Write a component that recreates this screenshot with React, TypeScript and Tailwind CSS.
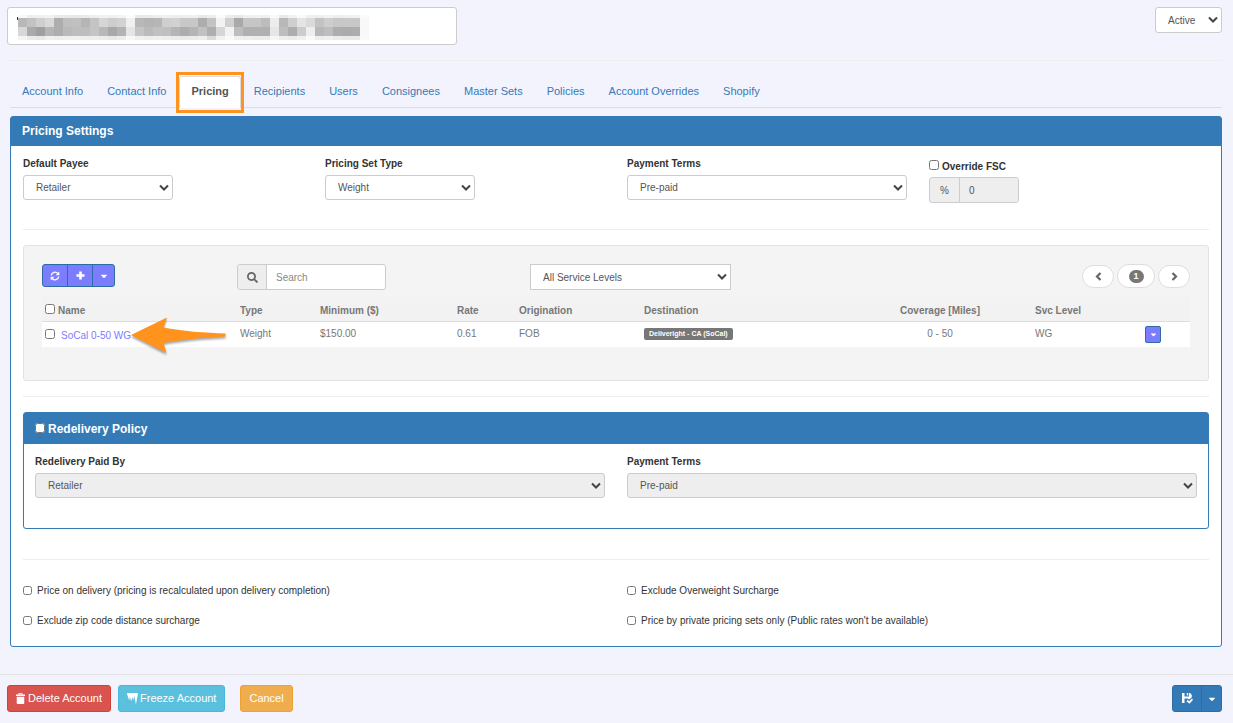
import React from "react";
import { FaCaretDown, FaIcicles, FaSearch } from "react-icons/fa";

const tabs = [
  "Account Info",
  "Contact Info",
  "Pricing",
  "Recipients",
  "Users",
  "Consignees",
  "Master Sets",
  "Policies",
  "Account Overrides",
  "Shopify",
];

const mosaicRows = [
  "f8 ee f0 f2 e9 ea e8 ea ee f2 f0 f4 fb ea ea ee f0 ee ee f0 e8 ec fb ec e8 f0 f2 f0 fa ea f2 fa f0 ee f2 ee f0 f2 fb",
  "b8 c2 cf d9 ad bf c0 b5 c4 d6 cd d2 f0 b8 b4 b6 cf d2 c8 c8 ad c3 f2 d0 a9 c6 c6 bd ed b8 cf e4 da c3 ce c8 c8 c8 f8",
  "d7 aa 9f b5 ad ba bd bd c4 b8 a8 b3 e5 c4 ba c1 c0 b5 ad b5 c1 ae d6 f2 bd b0 b0 b0 e6 bd ad cc ee b8 be ad ab ad f8",
  "f4 ec e8 f0 ee f0 f0 ee ee ec e8 ec f8 f0 ee f0 ee ec ea ec ee da f2 fa f0 ee ec ec f6 ee ec f0 fa ee f0 ec ea ea f9",
].map((row) => row.split(" "));

const mosaicY = [0, 3, 12, 21];
const mosaicHeight = [3, 9, 9, 4];

function Mosaic() {
  return (
    <svg width="352" height="25" viewBox="0 0 352 25" shapeRendering="crispEdges" aria-hidden="true">
      {mosaicRows.map((row, y) =>
        row.map((tone, x) => (
          <rect
            key={`${x}-${y}`}
            x={x * 9 + 1}
            y={mosaicY[y]}
            width="9"
            height={mosaicHeight[y]}
            fill={`#${tone}${tone}${tone}`}
          />
        )),
      )}
      <rect x="0" y="2" width="1" height="3" fill="#333" />
    </svg>
  );
}

function RefreshIcon() {
  return (
    <svg width="10" height="10" viewBox="0 0 20 20" fill="none" stroke="currentColor" strokeWidth="2.6" aria-hidden="true">
      <path d="M2.4 8.6A7.6 7.6 0 0 1 15.6 5" />
      <path d="M17.6 11.4A7.6 7.6 0 0 1 4.4 15" />
      <path d="M18.6 1v7.4h-7.4z" fill="currentColor" stroke="none" />
      <path d="M1.4 19v-7.4h7.4z" fill="currentColor" stroke="none" />
    </svg>
  );
}

function PlusIcon() {
  return (
    <svg width="9" height="9" viewBox="0 0 9 9" fill="currentColor" aria-hidden="true">
      <path d="M3.200 .5h2.600v2.700h2.700v2.600H5.800v2.700H3.200V5.800H.5V3.200h2.700z" />
    </svg>
  );
}

function ChevronIcon({ d }: { d: string }) {
  return (
    <svg width="7" height="9" viewBox="0 0 7 9" fill="none" stroke="currentColor" strokeWidth="2.2" aria-hidden="true">
      <path d={d} />
    </svg>
  );
}

function TrashIcon() {
  return (
    <svg width="9" height="11" viewBox="0 0 18 22" fill="currentColor" aria-hidden="true">
      <path d="M0 3h5V1.2C5 .5 5.5 0 6.200 0h5.600C12.500 0 13 .5 13 1.200V3h5v3H0zM7 1.500V3h4V1.500zM1.500 7.500h15V20c0 1.200-.8 2-2 2h-11c-1.200 0-2-.8-2-2z" />
    </svg>
  );
}

function SaveIcon() {
  return (
    <svg width="11" height="11" viewBox="0 0 22 22" fill="currentColor" aria-hidden="true">
      <path d="M0 0h5v7h9V0h2l3.500 3.500V9L14 13l-2.500-2H5v9H0z" />
      <path d="M9.500 0h3v5h-3z" />
      <path d="M9 16.500l2.500-2.500 3 2.500 5.500-5.500 2 2.500L15 21.500z" />
    </svg>
  );
}

type SelectProps = {
  id: string;
  value: string;
  label?: string;
  disabled?: boolean;
  className: string;
};

function Select({ id, value, label, disabled, className }: SelectProps) {
  return (
    <div className={`relative ${className}`}>
      <select
        id={id}
        aria-label={label}
        disabled={disabled}
        className="block h-full w-full appearance-none rounded-[inherit] border border-[#ccc] bg-white pr-5 pl-3 text-[#555] opacity-100 disabled:bg-[#eee]"
      >
        <option>{value}</option>
      </select>
      <svg
        className="pointer-events-none absolute inset-y-0 right-1 my-auto text-[#444]"
        width="10"
        height="8"
        viewBox="0 0 10 8"
        fill="none"
        stroke="currentColor"
        strokeWidth="2"
        aria-hidden="true"
      >
        <path d="M1 1.500L5 5.500L9 1.500" />
      </svg>
    </div>
  );
}

function Field({ id, label, children }: { id: string; label: string; children: React.ReactNode }) {
  return (
    <div>
      <label htmlFor={id} className="mb-1 block font-bold text-[#333]">
        {label}
      </label>
      {children}
    </div>
  );
}

function Option({ id, label }: { id: string; label: string }) {
  return (
    <div className="flex h-[30px] items-center">
      <input id={id} type="checkbox" className="mr-[5px] size-[9px]" />
      <label htmlFor={id}>{label}</label>
    </div>
  );
}

function ClickArrow() {
  return (
    <svg
      className="pointer-events-none absolute top-[-5px] left-[89px] drop-shadow-[0_2px_1px_rgba(0,0,0,0.35)]"
      width="96"
      height="38"
      viewBox="0 0 96 38"
      aria-hidden="true"
    >
      <path d="M0 18L36 0.500L32.500 10.500C50 14 75 16 94.500 16.500V19.500C75 20.500 50 22.500 32.500 26L35.500 36Z" fill="#ff931e" />
    </svg>
  );
}

export default function App() {
  return (
    <div className="flex min-h-screen flex-col bg-[#f3f3fe] font-['Liberation_Sans',Arial,sans-serif] text-[10px] leading-[15px] text-[#333]">
      <header className="mr-[11px] ml-[7px] flex items-start justify-between border-b border-[#eee] pt-[7px] pb-[15px]">
        <div className="relative w-[450px]">
          <input
            type="text"
            aria-label="Account name"
            className="block h-[38px] w-full rounded-[3px] border border-[#ccc] bg-white px-3"
          />
          <div className="pointer-events-none absolute top-2 left-[10px]">
            <Mosaic />
          </div>
        </div>
        <Select id="status" value="Active" label="Account status" className="h-[26px] w-[67px] rounded-[3px]" />
      </header>

      <nav className="mr-[11px] ml-[10px] mt-[15px] flex border-b border-[#ddd] pl-px text-[11px]">
        {tabs.map((tab) =>
          tab === "Pricing" ? (
            <a
              key={tab}
              href="#pricing"
              aria-current="page"
              className="relative mr-[2px] -mb-px rounded-t-[3px] border border-b-0 border-[#ddd] bg-white px-[11px] pt-[7px] pb-[9px] font-bold text-[#555]"
            >
              {tab}
              <span className="pointer-events-none absolute -inset-x-[4px] -top-[5px] -bottom-[5px] border-3 border-[#ff931e]" />
            </a>
          ) : (
            <a key={tab} href="#tab" className="mr-[2px] px-[11px] pt-2 pb-2 text-[#337ab7]">
              {tab}
            </a>
          ),
        )}
      </nav>

      <main className="mt-2 mr-[11px] ml-[10px] rounded-[3px] border border-[#337ab7] bg-white pb-[11px]">
        <h2 className="bg-[#337ab7] px-[11px] pt-[7px] pb-[7px] text-[12px] font-bold text-white">Pricing Settings</h2>

        <div className="mx-px grid grid-cols-4 pt-[10px]">
          <div className="px-[11px]">
            <Field id="payee" label="Default Payee">
              <Select id="payee" value="Retailer" className="h-[25px] w-[150px] rounded-[3px]" />
            </Field>
          </div>
          <div className="px-[11px]">
            <Field id="set-type" label="Pricing Set Type">
              <Select id="set-type" value="Weight" className="h-[25px] w-[150px] rounded-[3px]" />
            </Field>
          </div>
          <div className="px-[11px]">
            <Field id="terms" label="Payment Terms">
              <Select id="terms" value="Pre-paid" className="h-[25px] w-full rounded-[3px]" />
            </Field>
          </div>
          <div className="px-[11px]">
            <div className="flex items-start pt-[3px]">
              <input id="override" type="checkbox" className="mt-px mr-[3px] size-[10px]" />
              <label htmlFor="override" className="font-bold">
                Override FSC
              </label>
            </div>
            <div className="mt-[3px] flex h-[26px] w-[90px] overflow-hidden rounded-[3px] border border-[#ccc] bg-[#eee] text-[#555]">
              <label htmlFor="fsc" className="flex w-[30px] items-center justify-center border-r border-[#ccc]">
                %
              </label>
              <input id="fsc" type="text" disabled defaultValue="0" className="min-w-0 flex-1 bg-[#eee] px-[9px]" />
            </div>
          </div>
        </div>

        <div className="mx-3 mt-[26px] border-t border-[#eee] pt-[15px]">
          <section className="rounded-[3px] border border-[#e3e3e3] bg-[#f4f4f4] px-[18px] pt-[18px] pb-[33px]">
            <div className="flex h-[33px] items-start">
              <div className="flex w-[195px] shrink-0">
                <div className="flex h-[23px] divide-x divide-[#2e6da4] rounded-[3px] border border-[#2e6da4] bg-[#7c7cff] text-white">
                  <button type="button" aria-label="Refresh" className="flex w-[25px] items-center justify-center">
                    <RefreshIcon />
                  </button>
                  <button type="button" aria-label="Add" className="flex w-[25px] items-center justify-center">
                    <PlusIcon />
                  </button>
                  <button type="button" aria-label="More actions" className="flex w-[21px] items-center justify-center">
                    <FaCaretDown size={10} />
                  </button>
                </div>
              </div>
              <div className="mr-36 flex h-[26px] w-[149px] shrink-0 overflow-hidden rounded-[3px] border border-[#ccc] bg-white">
                <label
                  htmlFor="search"
                  aria-label="Search"
                  className="flex w-[29px] shrink-0 items-center justify-center border-r border-[#ccc] bg-[#eee] text-[#666]"
                >
                  <FaSearch size={11} />
                </label>
                <input
                  id="search"
                  type="text"
                  placeholder="Search"
                  className="min-w-0 flex-1 px-[9px] placeholder:text-[#888]"
                />
              </div>
              <Select
                id="levels"
                value="All Service Levels"
                label="Service level"
                className="h-[26px] w-[201px] rounded-none"
              />
              <div className="ml-auto flex items-end gap-[3px] text-[#666]">
                <button
                  type="button"
                  aria-label="Previous page"
                  className="flex h-[23px] w-8 items-center justify-center rounded-full border border-[#ddd] bg-white"
                >
                  <ChevronIcon d="M5.500 1L2 4.500L5.500 8" />
                </button>
                <button
                  type="button"
                  className="flex h-[24px] w-[38px] items-center justify-center rounded-full border border-[#ddd] bg-white"
                >
                  <span className="flex h-[13px] w-[15px] items-center justify-center rounded-full bg-[#777] text-[9px] font-bold text-white">
                    1
                  </span>
                </button>
                <button
                  type="button"
                  aria-label="Next page"
                  className="flex h-[23px] w-8 items-center justify-center rounded-full border border-[#ddd] bg-white"
                >
                  <ChevronIcon d="M1.500 1L5 4.500L1.500 8" />
                </button>
              </div>
            </div>

            <table className="w-full table-fixed text-left text-[#777]">
              <colgroup>
                <col className="w-[194px]" />
                <col className="w-[80px]" />
                <col className="w-[137px]" />
                <col className="w-[62px]" />
                <col className="w-[125px]" />
                <col className="w-[209px]" />
                <col className="w-[182px]" />
                <col className="w-[85px]" />
                <col className="w-[74px]" />
              </colgroup>
              <thead className="bg-[#f2f2f2]">
                <tr className="h-[24px] border-b border-[#ddd] align-top">
                  <th className="px-[3px] pt-[6px]">
                    <div className="flex items-start">
                      <input id="all-sets" type="checkbox" aria-label="Select all" className="mt-px mr-[3px] size-[10px]" />
                      <label htmlFor="all-sets">Name</label>
                    </div>
                  </th>
                  <th className="px-1 pt-[6px]">Type</th>
                  <th className="px-1 pt-[6px]">Minimum ($)</th>
                  <th className="px-1 pt-[6px]">Rate</th>
                  <th className="px-1 pt-[6px]">Origination</th>
                  <th className="px-1 pt-[6px]">Destination</th>
                  <th className="px-1 pt-[6px] text-center">Coverage [Miles]</th>
                  <th className="px-1 pt-[6px]">Svc Level</th>
                  <th className="px-1 pt-[6px]" aria-label="Actions" />
                </tr>
              </thead>
              <tbody>
                <tr className="h-[26px] bg-white align-top">
                  <td className="relative px-[3px] pt-[6px]">
                    <div className="flex items-start">
                      <input type="checkbox" aria-label="Select SoCal 0-50 WG" className="mt-px mr-[6px] size-[10px]" />
                      <a href="#socal" className="text-[#7c7cff]">
                        SoCal 0-50 WG
                      </a>
                    </div>
                    <ClickArrow />
                  </td>
                  <td className="px-1 pt-[4px]">Weight</td>
                  <td className="px-1 pt-[4px]">$150.00</td>
                  <td className="px-1 pt-[4px]">0.61</td>
                  <td className="px-1 pt-[4px]">FOB</td>
                  <td className="px-1 pt-[6px]">
                    <span className="block h-3 w-fit rounded-[2px] bg-[#777] px-[5px] text-[7px] leading-[12px] font-bold whitespace-nowrap text-white">
                      Deliveright - CA (SoCal)
                    </span>
                  </td>
                  <td className="px-1 pt-[4px] text-center">0 - 50</td>
                  <td className="px-1 pt-[4px]">WG</td>
                  <td className="pt-1">
                    <button
                      type="button"
                      aria-label="Row actions"
                      className="mx-auto flex h-[17px] w-4 items-center justify-center rounded-[2px] border border-[#2e6da4] bg-[#7c7cff] text-white"
                    >
                      <FaCaretDown size={9} />
                    </button>
                  </td>
                </tr>
              </tbody>
            </table>
          </section>
        </div>

        <div className="mx-3 mt-[15px] border-t border-[#eee] pt-[15px]">
          <section className="rounded-[3px] border border-[#337ab7] bg-white pb-[30px]">
            <h3 className="flex items-start bg-[#337ab7] px-[11px] pt-[9px] pb-[7px] text-[12px] font-bold text-white">
              <input id="redelivery" type="checkbox" className="mt-px mr-[3px] size-[10px]" />
              <label htmlFor="redelivery">Redelivery Policy</label>
            </h3>
            <div className="grid grid-cols-2 pt-[10px]">
              <div className="px-[11px]">
                <Field id="paid-by" label="Redelivery Paid By">
                  <Select id="paid-by" value="Retailer" disabled className="h-[25px] w-full rounded-[3px]" />
                </Field>
              </div>
              <div className="px-[11px]">
                <Field id="redelivery-terms" label="Payment Terms">
                  <Select id="redelivery-terms" value="Pre-paid" disabled className="h-[25px] w-full rounded-[3px]" />
                </Field>
              </div>
            </div>
          </section>
        </div>

        <div className="mx-3 mt-[30px] grid grid-cols-2 gap-x-[22px] border-t border-[#eee] pt-[15px]">
          <Option id="on-delivery" label="Price on delivery (pricing is recalculated upon delivery completion)" />
          <Option id="overweight" label="Exclude Overweight Surcharge" />
          <Option id="zip-distance" label="Exclude zip code distance surcharge" />
          <Option id="private-sets" label="Price by private pricing sets only (Public rates won't be available)" />
        </div>
      </main>

      <footer className="mt-auto flex items-center border-t border-[#e3e3e3] pt-[10px] pr-[11px] pb-[11px] pl-[7px] text-[11px] text-white">
        <button
          type="button"
          className="mr-[7px] flex h-[27px] items-center gap-[3px] rounded-[3px] border border-[#d43f3a] bg-[#d9534f] px-[8px]"
        >
          <TrashIcon />
          Delete Account
        </button>
        <button
          type="button"
          className="mr-[15px] flex h-[27px] items-center gap-[2px] rounded-[3px] border border-[#46b8da] bg-[#5bc0de] px-[8px]"
        >
          <FaIcicles size={11} />
          Freeze Account
        </button>
        <button type="button" className="h-[27px] rounded-[3px] border border-[#eea236] bg-[#f0ad4e] px-[8px]">
          Cancel
        </button>
        <div className="ml-auto flex h-[27px] divide-x divide-[#2e6da4] rounded-[3px] border border-[#2e6da4] bg-[#337ab7]">
          <button type="button" aria-label="Save" className="flex w-[29px] items-center justify-center">
            <SaveIcon />
          </button>
          <button type="button" aria-label="Save options" className="flex w-[19px] items-center justify-center">
            <FaCaretDown size={10} />
          </button>
        </div>
      </footer>
    </div>
  );
}
